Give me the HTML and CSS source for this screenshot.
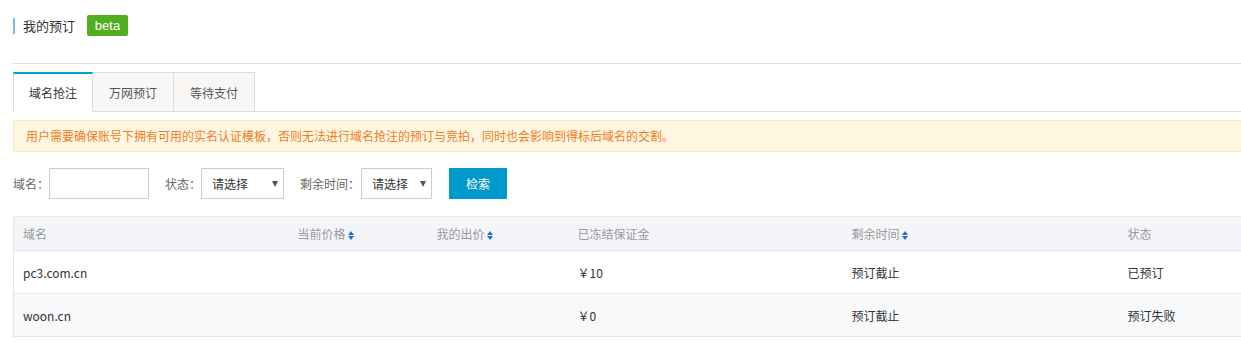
FILE: index.html
```html
<!DOCTYPE html>
<html lang="zh-CN">
<head>
    <meta charset="UTF-8">
    <title>我的预订</title>
    <link rel="stylesheet" href="styles.css">
</head>
<body>
    <div class="page-head">
        <span class="page-title">我的预订</span>
        <span class="badge">beta</span>
    </div>

    <div class="tabs">
        <div class="tab active">域名抢注</div>
        <div class="tab">万网预订</div>
        <div class="tab">等待支付</div>
    </div>

    <div class="alert">用户需要确保账号下拥有可用的实名认证模板，否则无法进行域名抢注的预订与竞拍，同时也会影响到得标后域名的交割。</div>

    <form class="search">
        <label class="field-label">域名：</label>
        <input type="text" class="text-input">
        <label class="field-label gap">状态：</label>
        <div class="select w83"><select><option>请选择</option></select></div>
        <label class="field-label gap">剩余时间：</label>
        <div class="select w71"><select><option>请选择</option></select></div>
        <button type="button" class="search-btn">检索</button>
    </form>

    <table class="grid">
        <colgroup>
            <col style="width:275px">
            <col style="width:139px">
            <col style="width:141px">
            <col style="width:274px">
            <col style="width:276px">
            <col>
        </colgroup>
        <thead>
            <tr>
                <th>域名</th>
                <th>当前价格<i class="sort"></i></th>
                <th>我的出价<i class="sort"></i></th>
                <th>已冻结保证金</th>
                <th>剩余时间<i class="sort"></i></th>
                <th>状态</th>
            </tr>
        </thead>
        <tbody>
            <tr>
                <td>pc3.com.cn</td>
                <td></td>
                <td></td>
                <td>￥10</td>
                <td>预订截止</td>
                <td>已预订</td>
            </tr>
            <tr class="alt">
                <td>woon.cn</td>
                <td></td>
                <td></td>
                <td>￥0</td>
                <td>预订截止</td>
                <td>预订失败</td>
            </tr>
        </tbody>
    </table>
</body>
</html>
```

FILE: styles.css
```css
body {
    margin: 0;
    padding: 15px 0 0 13px;
    font-family: "Noto Sans CJK SC", "Noto Sans", sans-serif;
    font-size: 12px;
    color: #333;
    background: #fff;
    overflow: hidden;
}
.page-head {
    display: flex;
    align-items: center;
    height: 21px;
    padding-bottom: 27px;
    border-bottom: 1px solid #ddd;
}
.page-title {
    border-left: 2px solid #7eb8e2;
    padding-left: 8px;
    font-size: 13px;
    line-height: 16px;
    color: #333;
}
.badge {
    margin-left: 12px;
    height: 21px;
    width: 41px;
    background: #52ad1f;
    color: #fff;
    border-radius: 2px;
    font-family: "Liberation Sans", Arial, sans-serif;
    font-size: 13px;
    line-height: 21px;
    text-align: center;
}
.tabs {
    display: flex;
    margin-top: 8px;
    border-bottom: 1px solid #ddd;
}
.tab {
    width: 80px;
    height: 40px;
    margin-bottom: -1px;
    line-height: 39px;
    text-align: center;
    background: #f8f7f6;
    border-top: 1px solid #ddd;
    border-right: 1px solid #ddd;
    border-bottom: 1px solid #ddd;
    box-sizing: border-box;
    color: #555;
}
.tab + .tab {
    width: 81px;
}
.tab.active {
    background: #fff;
    color: #333;
    border-top: 2px solid #00a0d2;
    border-left: 1px solid #ddd;
    border-bottom-color: #fff;
    line-height: 37px;
}
.alert {
    margin-top: 8px;
    height: 30px;
    line-height: 30px;
    padding-left: 12px;
    background: #fdf7e2;
    border: 1px solid #fbe7c2;
    border-right: none;
    color: #f7791d;
}
.search {
    display: flex;
    align-items: center;
    margin: 16px 0 0;
    height: 31px;
}
.field-label {
    color: #666;
}
.field-label.gap {
    margin-left: 16px;
}
.text-input {
    width: 100px;
    height: 31px;
    box-sizing: border-box;
    border: 1px solid #ccc;
    margin: 0;
}
.select {
    position: relative;
    height: 31px;
}
.select.w83 { width: 83px; }
.select.w71 { width: 71px; margin-left: 1px; }
.select select {
    appearance: none;
    -webkit-appearance: none;
    width: 100%;
    height: 31px;
    border: 1px solid #ccc;
    background: #fff;
    padding: 0 0 0 10px;
    font: inherit;
    font-size: 12px;
    color: #333;
    border-radius: 0;
}
.select::after {
    content: "";
    position: absolute;
    right: 6px;
    top: 13px;
    border-left: 3px solid transparent;
    border-right: 3px solid transparent;
    border-top: 6px solid #555;
}
.search-btn {
    margin-left: 17px;
    width: 58px;
    height: 31px;
    border: none;
    background: #0099cc;
    color: #fff;
    font: inherit;
    font-size: 12px;
    padding: 0;
}
.grid {
    margin-top: 17px;
    width: 1228px;
    table-layout: fixed;
    border-collapse: collapse;
    border-left: 1px solid #e2e5ea;
}
.grid th {
    height: 33px;
    background: #f3f5f9;
    color: #999;
    font-weight: normal;
    text-align: left;
    padding: 0 0 0 9px;
    border-top: 1px solid #e2e5ea;
    border-bottom: 1px solid #e2e5ea;
}
.grid td {
    height: 42px;
    padding: 0 0 0 9px;
    border-bottom: 1px solid #e2e5ea;
    color: #333;
}
.grid tr.alt td {
    background: #f8f9fb;
}
.sort {
    display: inline-block;
    position: relative;
    width: 6px;
    height: 9px;
    margin-left: 2px;
    vertical-align: -1px;
}
.sort::before,
.sort::after {
    content: "";
    position: absolute;
    left: 0;
    border-left: 3px solid transparent;
    border-right: 3px solid transparent;
}
.sort::before {
    top: 0;
    border-bottom: 4px solid #1e6fd3;
}
.sort::after {
    top: 5px;
    border-top: 4px solid #1e6fd3;
}
```
